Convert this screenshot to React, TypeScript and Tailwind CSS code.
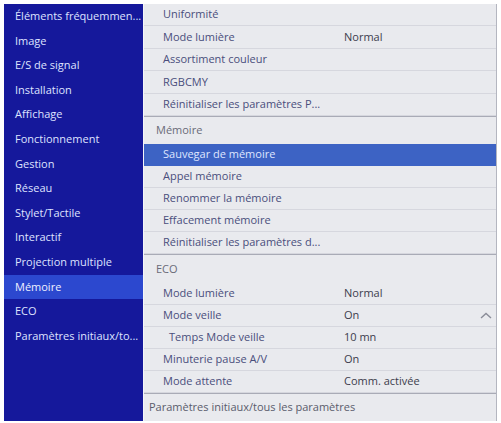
import React from 'react';

const navItems = [
  'Éléments fréquemmen...',
  'Image',
  'E/S de signal',
  'Installation',
  'Affichage',
  'Fonctionnement',
  'Gestion',
  'Réseau',
  'Stylet/Tactile',
  'Interactif',
  'Projection multiple',
  'Mémoire',
  'ECO',
  'Paramètres initiaux/to...',
];

type Row = { label: string; value?: string; indent?: boolean; active?: boolean; chevron?: boolean };

const group1: Row[] = [
  { label: 'Uniformité' },
  { label: 'Mode lumière', value: 'Normal' },
  { label: 'Assortiment couleur' },
  { label: 'RGBCMY' },
  { label: 'Réinitialiser les paramètres P...' },
];

const group2: Row[] = [
  { label: 'Sauvegar de mémoire', active: true },
  { label: 'Appel mémoire' },
  { label: 'Renommer la mémoire' },
  { label: 'Effacement mémoire' },
  { label: 'Réinitialiser les paramètres d...' },
];

const group3: Row[] = [
  { label: 'Mode lumière', value: 'Normal' },
  { label: 'Mode veille', value: 'On', chevron: true },
  { label: 'Temps Mode veille', value: '10 mn', indent: true },
  { label: 'Minuterie pause A/V', value: 'On' },
  { label: 'Mode attente', value: 'Comm. activée' },
];

function ItemRow({ row, tall }: { row: Row; tall?: boolean }) {
  return (
    <div
      className={
        'relative flex items-center border-b text-[11px] ' +
        (tall ? 'h-[22.4px] ' : 'h-[22px] ') +
        (row.active
          ? 'bg-[#3d63c4] text-[#dfe6ff] border-[#3d63c4]'
          : 'text-[#4a4e7c] border-[#d6d7de]')
      }
    >
      <span className={'w-[200px] shrink-0 truncate ' + (row.indent ? 'pl-[25px]' : 'pl-[19px]')}>
        {row.label}
      </span>
      {row.value && <span className="text-[#3c3d4c]">{row.value}</span>}
      {row.chevron && (
        <svg className="absolute right-[4px] top-[7px]" width="12" height="7" viewBox="0 0 12 7">
          <path d="M1 6 L6 1.5 L11 6" fill="none" stroke="#8a8c98" strokeWidth="1.4" />
        </svg>
      )}
    </div>
  );
}

function Header({ label, h }: { label: string; h: string }) {
  return (
    <div className={'flex items-center border-t border-[#a9abb6] pl-[12px] text-[11px] text-[#6a6b78] ' + h}>
      {label}
    </div>
  );
}

export default function App() {
  return (
    <div className="h-[423px] w-[501px] bg-white pl-[4px] pt-[4px] font-['Open_Sans',sans-serif]">
      <div className="flex h-[417px] w-[493px]">
        <div className="w-[139px] shrink-0 bg-[#15189b]">
          {navItems.map((item) => (
            <div
              key={item}
              className={
                'flex h-[24.6px] items-center truncate pl-[11px] text-[11px] ' +
                (item === 'Mémoire' ? 'bg-[#2c48cf] text-[#eef1ff]' : 'text-[#dfe3ff]')
              }
            >
              {item}
            </div>
          ))}
        </div>
        <div className="flex-1 border-l border-r border-l-[#f4f5f8] border-r-[#b4b6c0] bg-[#e9eaee]">
          {group1.map((r) => (
            <ItemRow key={r.label} row={r} tall />
          ))}
          <Header label="Mémoire" h="h-[28px]" />
          {group2.map((r) => (
            <ItemRow key={r.label} row={r} />
          ))}
          <Header label="ECO" h="h-[29px]" />
          {group3.map((r) => (
            <ItemRow key={r.label} row={r} />
          ))}
          <div className="flex h-[27px] items-center border-t border-[#a9abb6] pl-[5px] text-[11px] text-[#5a5c6c]">
            Paramètres initiaux/tous les paramètres
          </div>
        </div>
      </div>
    </div>
  );
}
